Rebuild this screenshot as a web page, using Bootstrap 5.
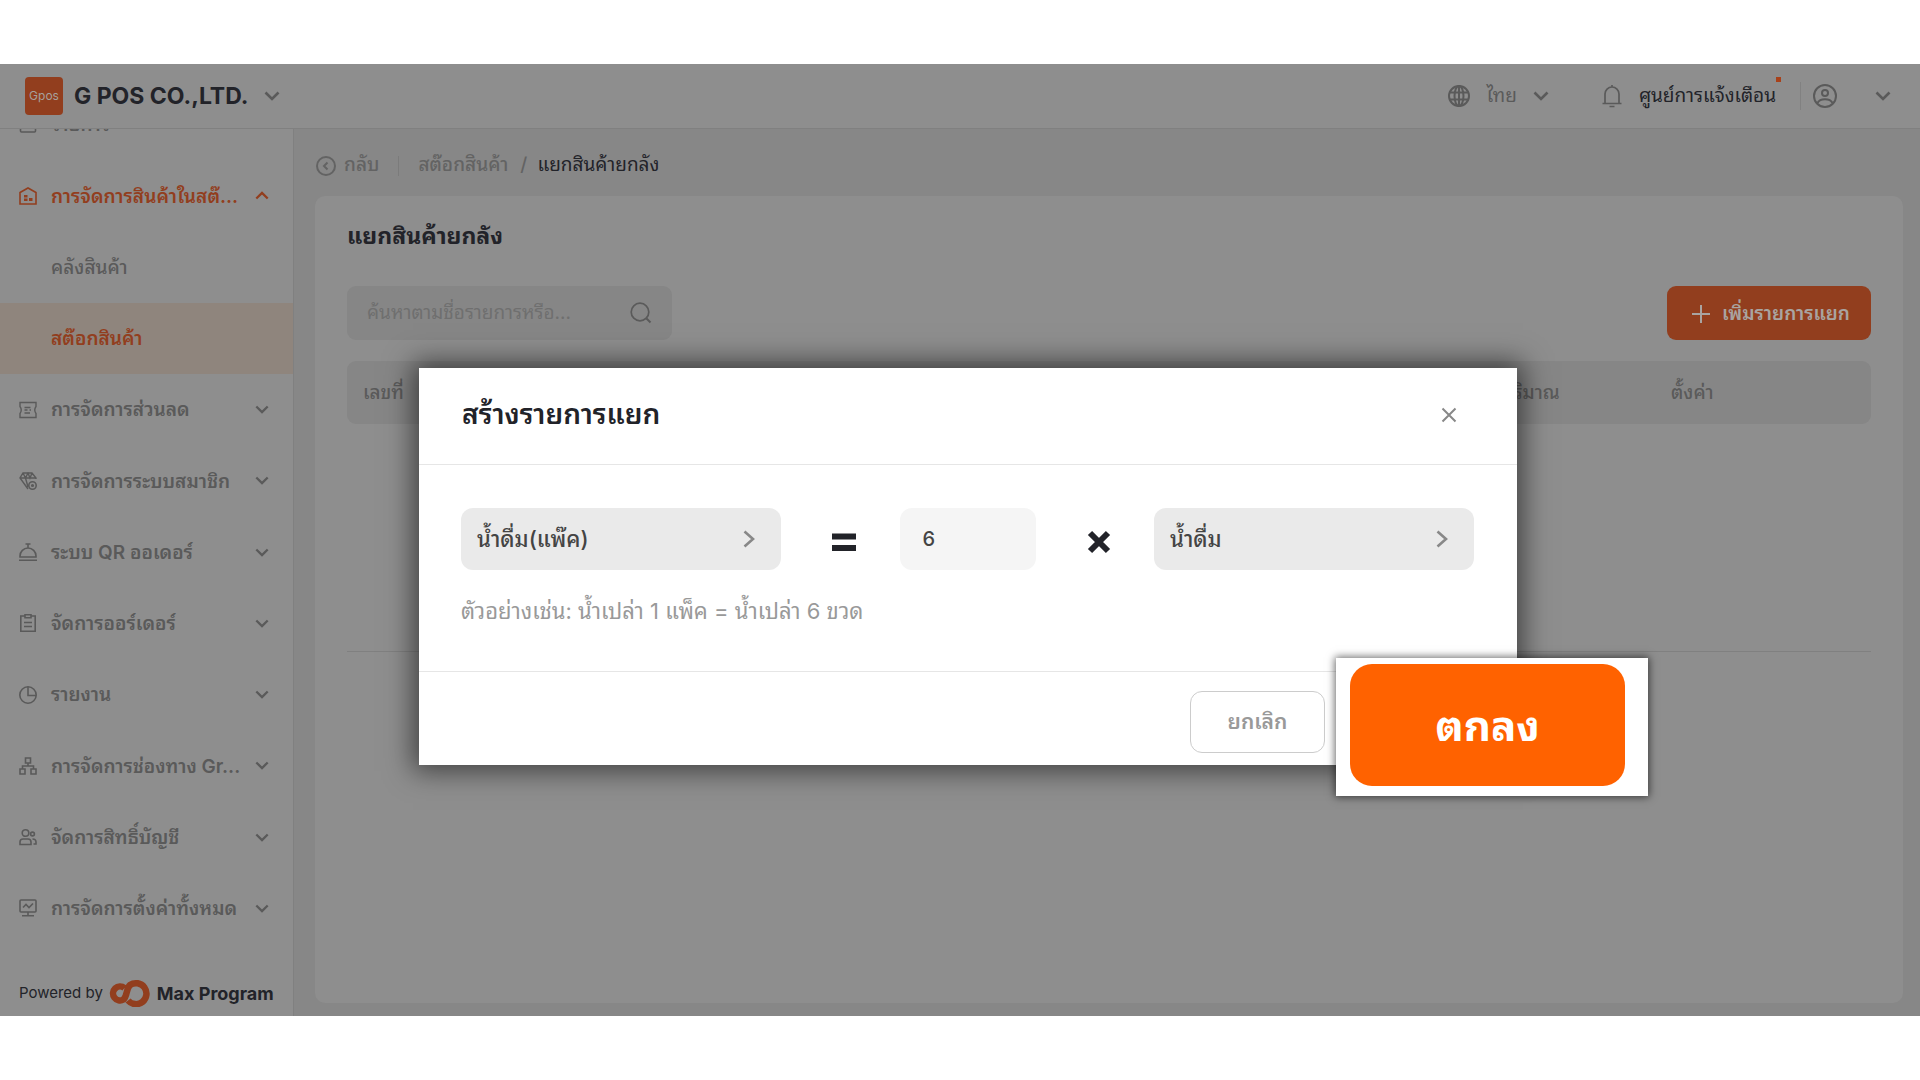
<!DOCTYPE html>
<html lang="th">
<head>
<meta charset="utf-8">
<meta name="viewport" content="width=device-width, initial-scale=1">
<title>G POS - แยกสินค้ายกลัง</title>
<link href="https://cdn.jsdelivr.net/npm/bootstrap@5.3.0/dist/css/bootstrap.min.css" rel="stylesheet">
<style>
  :root { --ink:#222329; --dim:#5a5a5a; --soft:#636363; --brand:#923e1e; --surface:#8e8e8e; --canvas:#878787; --rule:#808080; }
  body { font-family: Inter, "Noto Sans Thai Looped", Loma, "Noto Sans Thai", "Noto Sans", sans-serif; font-size:19px; background:#fff; color:var(--dim); }
  svg { display:block; flex:none; fill:none; stroke:currentColor; stroke-width:2; }
  a, a:hover { color:inherit; text-decoration:none; }
  .app-shell { margin:64px 0; height:calc(100vh - 128px); background:var(--canvas); }
  .top-bar { height:65px; background:var(--surface); border-bottom:1px solid var(--rule); padding:0 29px 0 25px; }
  .logo-tile { width:38px; height:38px; border-radius:4px; background:var(--brand); color:#a6a09c; font-size:12px; }
  .company { font-size:23px; font-weight:700; color:var(--ink); margin:0 16px 0 3px; }
  .plain-btn { border:0; background:none; padding:0; color:inherit; }
  .bell-link { margin-left:52px; }
  .bell-link .label { color:var(--ink); }
  .user-arrow { margin-left:38px; }
  .alert-dot { width:5px; height:5px; background:#a8411a; top:-5px; left:100%; }
  .side { width:294px; background:var(--surface); border-right:1px solid var(--rule); overflow:hidden; }
  .side-list { margin-top:-40px; }
  .side-link { padding:0 24px 0 19px; font-weight:600; white-space:nowrap; }
  .side-link > svg:first-child { stroke-width:1.6; }
  .side-link .label { margin-left:14px; padding-top:2px; }
  .side-link.sub { padding-left:51px; font-weight:500; }
  .side-link.sub .label { margin-left:0; }
  .side-link.open, .side-link.current { color:var(--brand); font-weight:600; }
  .side-link.current { background:#8f857d; }
  .powered { height:72px; padding:26px 19px 0; color:var(--ink); gap:6px; font-size:15px; }
  .powered strong { font-size:18px; }
  .content-area { padding:0 17px 13px 21px; }
  .crumbs { height:67px; padding:6px 0 0 1px; font-weight:500; color:var(--soft); }
  .crumbs .bar-line { width:1px; height:20px; margin:0 19px; background:#7b7b7b; }
  .crumbs .slash { margin:0 10px 0 12px; }
  .crumbs .here { color:var(--ink); font-weight:400; }
  .panel { background:var(--surface); border-radius:10px; padding:25px 32px 24px; }
  .panel-title { font-size:23px; line-height:30px; font-weight:700; color:var(--ink); margin:0 0 35px; }
  .search-box { width:325px; height:54px; border-radius:9px; background:#868686; padding:0 20px; }
  .search-box input { border:0; background:none; outline:0; padding:0; color:var(--dim); min-width:0; }
  .search-box input::placeholder { color:#6f6f6f; opacity:1; }
  .add-btn { width:204px; height:54px; border:0; border-radius:9px; background:var(--brand); color:#a9a4a1; font-weight:600; gap:12px; padding:2px 0 0 4px; }
  .stock-table { margin-top:21px; border-collapse:separate; border-spacing:0; table-layout:fixed; }
  .stock-table th { height:63px; background:#868686; font-weight:500; padding:2px 16px 0; }
  .stock-table th:first-child { border-radius:9px 0 0 9px; }
  .stock-table th:last-child { border-radius:0 9px 9px 0; }
  .stock-table td { height:228px; border-bottom:1px solid var(--rule); }
  .dialog-box { top:304px; left:419px; right:403px; background:#fff; box-shadow:0 0 26px 6px rgba(0,0,0,.55); }
  .dialog-head { height:97px; padding:0 60px 2px 43px; border-bottom:1px solid #e6e6e6; }
  .dialog-head h2 { font-size:28px; font-weight:600; color:var(--ink); margin:0; }
  .dialog-main { height:207px; padding:43px 43px 0 42px; border-bottom:1px solid #e6e6e6; }
  .pick { width:320px; height:62px; border:0; border-radius:12px; background:#eaeaea; color:#444; font-size:22px; font-weight:500; padding:0 26px 0 16px; }
  .pick svg { color:#888; }
  .math-sign { margin-left:8px; color:var(--ink); stroke-width:6; }
  .qty { width:136px; height:62px; border:0; border-radius:12px; background:#f5f5f5; color:#444; font-size:20px; font-weight:500; padding:0 23px; }
  .hint { font-size:22px; line-height:28px; color:#999; margin:27px 0 0; }
  .dialog-foot { height:93px; padding:7px 192px 0 43px; }
  .cancel-btn { width:135px; height:62px; border:1px solid #ccc; border-radius:12px; background:#fff; color:#999; font-size:21px; font-weight:600; }
  .callout-box { top:594px; right:272px; width:312px; height:138px; padding:6px 23px 10px 14px; background:#fff; box-shadow:0 0 8px 1px rgba(0,0,0,.6); }
  .ok-btn { border:0; border-radius:22px; background:#ff6200; color:#fff; font-size:42px; font-weight:700; }
</style>
<script src="https://cdn.jsdelivr.net/npm/bootstrap@5.3.0/dist/js/bootstrap.bundle.min.js"></script>
</head>
<body>
<svg width="0" height="0" class="position-absolute" aria-hidden="true">
  <symbol id="down" viewBox="0 0 16 10"><path d="M1.500 1.500 8 8l6.500-6.500" stroke-width="2.600"/></symbol>
  <symbol id="up" viewBox="0 0 16 10"><path d="M1.500 8.500 8 2l6.500 6.500" stroke-width="2.600"/></symbol>
  <symbol id="next" viewBox="0 0 12 18"><path d="m1.500 1.500 8.500 7.500-8.500 7.500" stroke-width="2.600"/></symbol>
</svg>
<div class="app-shell position-relative d-flex flex-column">
  <header class="top-bar d-flex align-items-center justify-content-between">
    <div class="d-flex align-items-center">
      <div class="logo-tile d-flex align-items-center justify-content-center me-2">Gpos</div>
      <button class="plain-btn d-flex align-items-center"><span class="company">G POS CO.,LTD.</span><svg width="16" height="10"><use href="#down"/></svg></button>
    </div>
    <div class="d-flex align-items-center">
      <button class="plain-btn d-flex align-items-center">
        <svg width="22" height="22" viewBox="0 0 22 22"><circle cx="11" cy="11" r="10"/><ellipse cx="11" cy="11" rx="4.500" ry="10"/><path d="M1.500 7.500h19M1.500 14.500h19M11 1v20"/></svg>
        <span class="ms-3 me-3">ไทย</span><svg width="16" height="10"><use href="#down"/></svg>
      </button>
      <a href="#" class="bell-link d-flex align-items-center">
        <svg width="22" height="24" viewBox="0 0 22 24"><path d="M11 1v2M4 19v-9a7 7 0 0 1 14 0v9M1.500 19.500h19M8.500 22.500h5" stroke-width="1.700"/></svg>
        <span class="label position-relative ms-3">ศูนย์การแจ้งเตือน<i class="alert-dot position-absolute"></i></span>
      </a>
      <span class="vr ms-4 me-2"></span>
      <button class="plain-btn d-flex align-items-center ms-1" aria-label="บัญชีผู้ใช้">
        <svg width="24" height="24" viewBox="0 0 24 24"><circle cx="12" cy="12" r="11"/><circle cx="12" cy="9" r="3"/><path d="M4.500 19c2.500-5 12.500-5 15 0"/></svg>
        <svg class="user-arrow" width="16" height="10"><use href="#down"/></svg>
      </button>
    </div>
  </header>
  <div class="d-flex flex-fill overflow-hidden">
    <aside class="side d-flex flex-column flex-shrink-0">
      <nav class="side-list d-flex flex-column flex-fill">
        <a href="#" class="side-link d-flex align-items-center flex-fill"><svg width="18" height="18" viewBox="0 0 18 18"><rect x="1.500" y="1" width="15" height="15" rx="1"/><path d="M5 12h8"/></svg><span class="label">รายการ</span><svg class="ms-auto" width="14" height="9"><use href="#down"/></svg></a>
        <a href="#" class="side-link open d-flex align-items-center flex-fill"><svg width="18" height="18" viewBox="0 0 18 18"><path d="M1 17V5.500L9 1l8 4.500V17z"/><path d="M5 8h3.500v2.500H5zM5 11.500h3.500V14H5zM10 11h3.500v3H10z" fill="currentColor" stroke="none"/></svg><span class="label">การจัดการสินค้าในสต๊...</span><svg class="ms-auto" width="14" height="9"><use href="#up"/></svg></a>
        <a href="#" class="side-link sub d-flex align-items-center flex-fill"><span class="label">คลังสินค้า</span></a>
        <a href="#" class="side-link sub current d-flex align-items-center flex-fill"><span class="label">สต๊อกสินค้า</span></a>
        <a href="#" class="side-link d-flex align-items-center flex-fill"><svg width="18" height="18" viewBox="0 0 18 18"><path d="M1 1.500h16V5.500Q14.500 9 17 12.500v4H1v-4Q3.500 9 1 5.500zM5.500 6.500h6M5.500 9h3M5.500 12h5.500M10.500 9h1.500" stroke-width="1.400"/></svg><span class="label">การจัดการส่วนลด</span><svg class="ms-auto" width="14" height="9"><use href="#down"/></svg></a>
        <a href="#" class="side-link d-flex align-items-center flex-fill"><svg width="18" height="18" viewBox="0 0 18 18"><path d="M9 17 1 6l3-5h9l4 5v1M1 6h16M4 1l2.500 5L9 15M13 1l-2 5-2-5-2.500 5" stroke-width="1.400"/><circle cx="13.500" cy="13.500" r="3.700"/><circle cx="13.500" cy="13.500" r=".8"/></svg><span class="label">การจัดการระบบสมาชิก</span><svg class="ms-auto" width="14" height="9"><use href="#down"/></svg></a>
        <a href="#" class="side-link d-flex align-items-center flex-fill"><svg width="18" height="18" viewBox="0 0 18 18"><path d="M6.500 1h5M9 1v4M1 14v-1a8 8 0 0 1 16 0v1zM0 17.200h18"/></svg><span class="label">ระบบ QR ออเดอร์</span><svg class="ms-auto" width="14" height="9"><use href="#down"/></svg></a>
        <a href="#" class="side-link d-flex align-items-center flex-fill"><svg width="18" height="18" viewBox="0 0 18 18"><path d="M6 2H1.800v15.200h14.400V2H12M6 .8h6v3H6zM5 8.500h8M5 12.500h8"/></svg><span class="label">จัดการออร์เดอร์</span><svg class="ms-auto" width="14" height="9"><use href="#down"/></svg></a>
        <a href="#" class="side-link d-flex align-items-center flex-fill"><svg width="18" height="18" viewBox="0 0 18 18"><circle cx="9" cy="9" r="8.200"/><path d="M9 1v8.500h8"/></svg><span class="label">รายงาน</span><svg class="ms-auto" width="14" height="9"><use href="#down"/></svg></a>
        <a href="#" class="side-link d-flex align-items-center flex-fill"><svg width="18" height="18" viewBox="0 0 18 18"><path d="M6.500 1h5v5h-5zM1 12h5v5H1zM12 12h5v5h-5zM9 6v3M3.500 12V9h11v3"/></svg><span class="label">การจัดการช่องทาง Gr...</span><svg class="ms-auto" width="14" height="9"><use href="#down"/></svg></a>
        <a href="#" class="side-link d-flex align-items-center flex-fill"><svg width="18" height="18" viewBox="0 0 18 18"><circle cx="6.500" cy="5" r="3.300"/><circle cx="13.500" cy="6" r="1.900"/><path d="M1 16.500V14q0-3 3-3h5q3 0 3 3v2.500zM13.500 11q3.500 0 3.500 3v2h-2.500"/></svg><span class="label">จัดการสิทธิ์บัญชี</span><svg class="ms-auto" width="14" height="9"><use href="#down"/></svg></a>
        <a href="#" class="side-link d-flex align-items-center flex-fill"><svg width="18" height="18" viewBox="0 0 18 18"><rect x="1" y="1" width="16" height="12" rx="1"/><path d="m4 8.500 3-3 3 3 4-4M9 13v3.500M3 16.800h12"/></svg><span class="label">การจัดการตั้งค่าทั้งหมด</span><svg class="ms-auto" width="14" height="9"><use href="#down"/></svg></a>
      </nav>
      <div class="powered d-flex align-items-center">
        <span>Powered by</span>
        <svg width="42" height="28" viewBox="0 0 42 28" style="color:var(--brand)"><path d="M15.500 9a7 7 0 1 0-1 11.500C18.500 17 17 9.500 21 6a10.500 10.500 0 1 1-2 15.500" stroke-width="6.500"/></svg>
        <strong>Max Program</strong>
      </div>
    </aside>
    <main class="content-area d-flex flex-column flex-fill">
      <nav class="crumbs d-flex align-items-center">
        <a href="#" class="d-flex align-items-center"><svg width="20" height="20" viewBox="0 0 20 20"><circle cx="10" cy="10" r="9"/><path d="M11.500 6.500 8 10l3.500 3.500"/></svg><span class="ms-2">กลับ</span></a>
        <span class="bar-line"></span>
        <a href="#">สต๊อกสินค้า</a><span class="slash">/</span><span class="here">แยกสินค้ายกลัง</span>
      </nav>
      <section class="panel flex-fill">
        <h1 class="panel-title">แยกสินค้ายกลัง</h1>
        <div class="d-flex justify-content-between">
          <label class="search-box d-flex align-items-center justify-content-between">
            <input class="flex-fill" type="text" aria-label="ค้นหา" placeholder="ค้นหาตามชื่อรายการหรือ...">
            <svg width="22" height="22" viewBox="0 0 22 22"><circle cx="10" cy="10" r="8.800" stroke-width="1.700"/><path d="m16.500 16.500 4 4"/></svg>
          </label>
          <button class="add-btn d-flex align-items-center justify-content-center"><svg width="18" height="18" viewBox="0 0 18 18"><path d="M9 0v18M0 9h18"/></svg>เพิ่มรายการแยก</button>
        </div>
        <table class="stock-table w-100">
          <colgroup><col><col style="width:170px"><col style="width:216px"></colgroup>
          <thead><tr><th>เลขที่</th><th>ปริมาณ</th><th>ตั้งค่า</th></tr></thead>
          <tbody><tr><td colspan="3"></td></tr></tbody>
        </table>
      </section>
    </main>
  </div>
  <div class="dialog-box position-absolute" role="dialog" aria-labelledby="dlg">
    <div class="dialog-head d-flex align-items-center justify-content-between">
      <h2 id="dlg">สร้างรายการแยก</h2>
      <button class="plain-btn" aria-label="ปิด" style="color:#888"><svg width="16" height="16" viewBox="0 0 16 16"><path d="m1.500 1.500 13 13m0-13-13 13"/></svg></button>
    </div>
    <div class="dialog-main">
      <div class="d-flex align-items-center justify-content-between">
        <button class="pick d-flex align-items-center justify-content-between">น้ำดื่ม(แพ๊ค)<svg width="12" height="18"><use href="#next"/></svg></button>
        <svg class="math-sign" width="26" height="32" viewBox="0 0 26 32"><path d="M1 13.500h24M1 25h24"/></svg>
        <input class="qty" type="text" aria-label="จำนวน" value="6">
        <svg class="math-sign" width="26" height="32" viewBox="0 0 26 32"><path d="m4 10 18 18m0-18L4 28"/></svg>
        <button class="pick d-flex align-items-center justify-content-between">น้ำดื่ม<svg width="12" height="18"><use href="#next"/></svg></button>
      </div>
      <p class="hint">ตัวอย่างเช่น: น้ำเปล่า 1 แพ็ค = น้ำเปล่า 6 ขวด</p>
    </div>
    <div class="dialog-foot d-flex align-items-center justify-content-end"><button class="cancel-btn">ยกเลิก</button></div>
  </div>
  <div class="callout-box position-absolute d-flex"><button class="ok-btn flex-fill">ตกลง</button></div>
</div>
</body>
</html>
